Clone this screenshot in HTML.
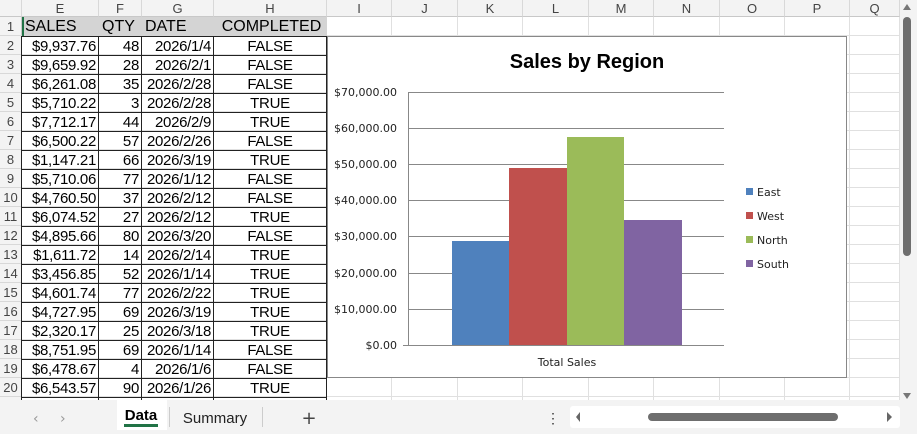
<!DOCTYPE html>
<html><head><style>
body{margin:0;width:917px;height:434px;overflow:hidden;background:#fff;font-family:"Liberation Sans",Arial,sans-serif;position:relative}
.a{position:absolute}
.ch{position:absolute;top:0;height:17px;background:#f3f3f3;border-right:1px solid #d8d8d8;border-bottom:1px solid #c8c8c8;font-size:13px;color:#444;text-align:center;line-height:17px;box-sizing:border-box}
.rh{position:absolute;left:0;width:22px;height:19px;background:#f3f3f3;border-bottom:1px solid #d8d8d8;border-right:1px solid #c8c8c8;font-size:13px;color:#444;text-align:center;line-height:19px;box-sizing:border-box}
.c{position:absolute;height:20px;font-size:15px;line-height:19px;box-sizing:border-box;border:1px solid #222;margin-left:-1px;padding:0 2px;white-space:nowrap;overflow:hidden;letter-spacing:-0.3px}
.g{position:absolute;background:#e0e0e0}
</style></head><body>
<div id="grid"></div>
<script>
var cols=[["E",22,99],["F",99,142],["G",142,214],["H",214,327],["I",327,392],["J",392,458],["K",458,523],["L",523,589],["M",589,654],["N",654,720],["O",720,785],["P",785,850],["Q",850,900]];
var h='<div class="ch" style="left:0;width:22px"></div>';
cols.forEach(function(c){h+='<div class="ch" style="left:'+c[1]+'px;width:'+(c[2]-c[1])+'px">'+c[0]+'</div>';});
for(var r=1;r<=21;r++){var t=17+(r-1)*19;h+='<div class="rh" style="top:'+t+'px">'+(r<21?r:'')+'</div>';
h+='<div class="g" style="left:22px;top:'+(t+18)+'px;width:878px;height:1px"></div>';}
cols.forEach(function(c){h+='<div class="g" style="left:'+(c[2]-1)+'px;top:17px;width:1px;height:383px"></div>';});
var d=[["$9,937.76",48,"2026/1/4","FALSE"],["$9,659.92",28,"2026/2/1","FALSE"],["$6,261.08",35,"2026/2/28","FALSE"],["$5,710.22",3,"2026/2/28","TRUE"],["$7,712.17",44,"2026/2/9","TRUE"],["$6,500.22",57,"2026/2/26","FALSE"],["$1,147.21",66,"2026/3/19","TRUE"],["$5,710.06",77,"2026/1/12","FALSE"],["$4,760.50",37,"2026/2/12","FALSE"],["$6,074.52",27,"2026/2/12","TRUE"],["$4,895.66",80,"2026/3/20","FALSE"],["$1,611.72",14,"2026/2/14","TRUE"],["$3,456.85",52,"2026/1/14","TRUE"],["$4,601.74",77,"2026/2/22","TRUE"],["$4,727.95",69,"2026/3/19","TRUE"],["$2,320.17",25,"2026/3/18","TRUE"],["$8,751.95",69,"2026/1/14","FALSE"],["$6,478.67",4,"2026/1/6","FALSE"],["$6,543.57",90,"2026/1/26","TRUE"],["",null,"",""]];
h+='<div class="a" style="left:22px;top:17px;width:305px;height:19px;background:#d4d4d4"></div>';
var hd=["SALES","QTY","DATE","COMPLETED"];
for(var i=0;i<4;i++){var c=cols[i];h+='<div class="a" style="left:'+(c[1]+3)+'px;top:17px;font-size:16px;line-height:19px;width:'+(c[2]-c[1]-4)+'px;'+(i==3?'text-align:center':'')+'">'+hd[i]+'</div>';}
h+='<div class="a" style="left:22px;top:17px;width:2px;height:19px;background:#217346"></div>';
d.forEach(function(row,j){var t=36+j*19;for(var i=0;i<4;i++){var c=cols[i];var v=row[i]===null?'':row[i];
h+='<div class="c" style="left:'+(c[1])+'px;top:'+t+'px;width:'+(c[2]-c[1]+1)+'px;text-align:'+(i==3?'center':'right')+';'+(j==19?'height:4px':'')+'">'+v+'</div>';}});
document.getElementById('grid').innerHTML=h;
</script>
<div class="a" style="left:327px;top:36px;width:520px;height:342px;background:#fff;border:1px solid #888;box-sizing:border-box"></div>
<svg class="a" style="left:0;top:0" width="917" height="434">
<text x="587" y="68" font-family="Liberation Sans,sans-serif" font-weight="bold" font-size="20" text-anchor="middle">Sales by Region</text>
<g stroke="#888" stroke-width="1">
<line x1="408" y1="92.5" x2="724" y2="92.5"/><line x1="408" y1="128.5" x2="724" y2="128.5"/><line x1="408" y1="164.5" x2="724" y2="164.5"/><line x1="408" y1="200.5" x2="724" y2="200.5"/><line x1="408" y1="236.5" x2="724" y2="236.5"/><line x1="408" y1="273.5" x2="724" y2="273.5"/><line x1="408" y1="309.5" x2="724" y2="309.5"/><line x1="403" y1="345.5" x2="724" y2="345.5"/><line x1="408.5" y1="92" x2="408.5" y2="345"/>
</g>
<rect x="452" y="241" width="57" height="104" fill="#4f81bd"/>
<rect x="509" y="168" width="58" height="177" fill="#c0504d"/>
<rect x="567" y="137" width="57" height="208" fill="#9bbb59"/>
<rect x="624" y="220" width="58" height="125" fill="#8064a2"/>
<g font-family="DejaVu Sans,sans-serif" font-size="11" fill="#222" text-anchor="end">
<text x="397" y="96">$70,000.00</text><text x="397" y="132">$60,000.00</text><text x="397" y="168">$50,000.00</text><text x="397" y="204">$40,000.00</text><text x="397" y="240">$30,000.00</text><text x="397" y="277">$20,000.00</text><text x="397" y="313">$10,000.00</text><text x="397" y="349">$0.00</text>
</g>
<text x="567" y="366" font-family="DejaVu Sans,sans-serif" font-size="11" text-anchor="middle" fill="#222">Total Sales</text>
<g font-family="DejaVu Sans,sans-serif" font-size="11" fill="#222">
<rect x="746" y="188" width="7" height="7" fill="#4f81bd"/><text x="757" y="196">East</text>
<rect x="746" y="212" width="7" height="7" fill="#c0504d"/><text x="757" y="220">West</text>
<rect x="746" y="236" width="7" height="7" fill="#9bbb59"/><text x="757" y="244">North</text>
<rect x="746" y="260" width="7" height="7" fill="#8064a2"/><text x="757" y="268">South</text>
</g>
<rect x="900" y="0" width="17" height="400" fill="#f3f3f3"/>
<rect x="903" y="17" width="8" height="239" rx="4" fill="#6e6e6e"/>
<path d="M903 10 L907 4 L911 10Z" fill="#777"/><path d="M903 393 L907 399 L911 393Z" fill="#777"/>
<rect x="0" y="400" width="917" height="34" fill="#f3f3f3"/>
<text x="33" y="423" font-size="14" fill="#999" font-family="DejaVu Sans">‹</text><text x="60" y="423" font-size="14" fill="#999" font-family="DejaVu Sans">›</text>
<rect x="117" y="400" width="50" height="30" fill="#fff"/>
<text x="141" y="420" font-size="15" font-weight="bold" text-anchor="middle" font-family="Liberation Sans">Data</text>
<rect x="124" y="424" width="34" height="3" fill="#217346"/>
<line x1="169.5" y1="407" x2="169.5" y2="427" stroke="#ccc"/>
<text x="215" y="423" font-size="15" text-anchor="middle" font-family="Liberation Sans" fill="#222">Summary</text>
<line x1="262.5" y1="407" x2="262.5" y2="427" stroke="#ccc"/>
<text x="309" y="424" font-size="18" text-anchor="middle" fill="#444" font-family="DejaVu Sans">+</text>
<text x="553" y="423" font-size="14" text-anchor="middle" fill="#333">⋮</text>
<rect x="570" y="406" width="330" height="22" rx="3" fill="#fff"/>
<path d="M580 412 L576 417 L580 422Z" fill="#666"/>
<rect x="648" y="413" width="190" height="8" rx="4" fill="#6e6e6e"/>
<path d="M887 412 L892 417 L887 422Z" fill="#666"/>
</svg>
</body></html>
